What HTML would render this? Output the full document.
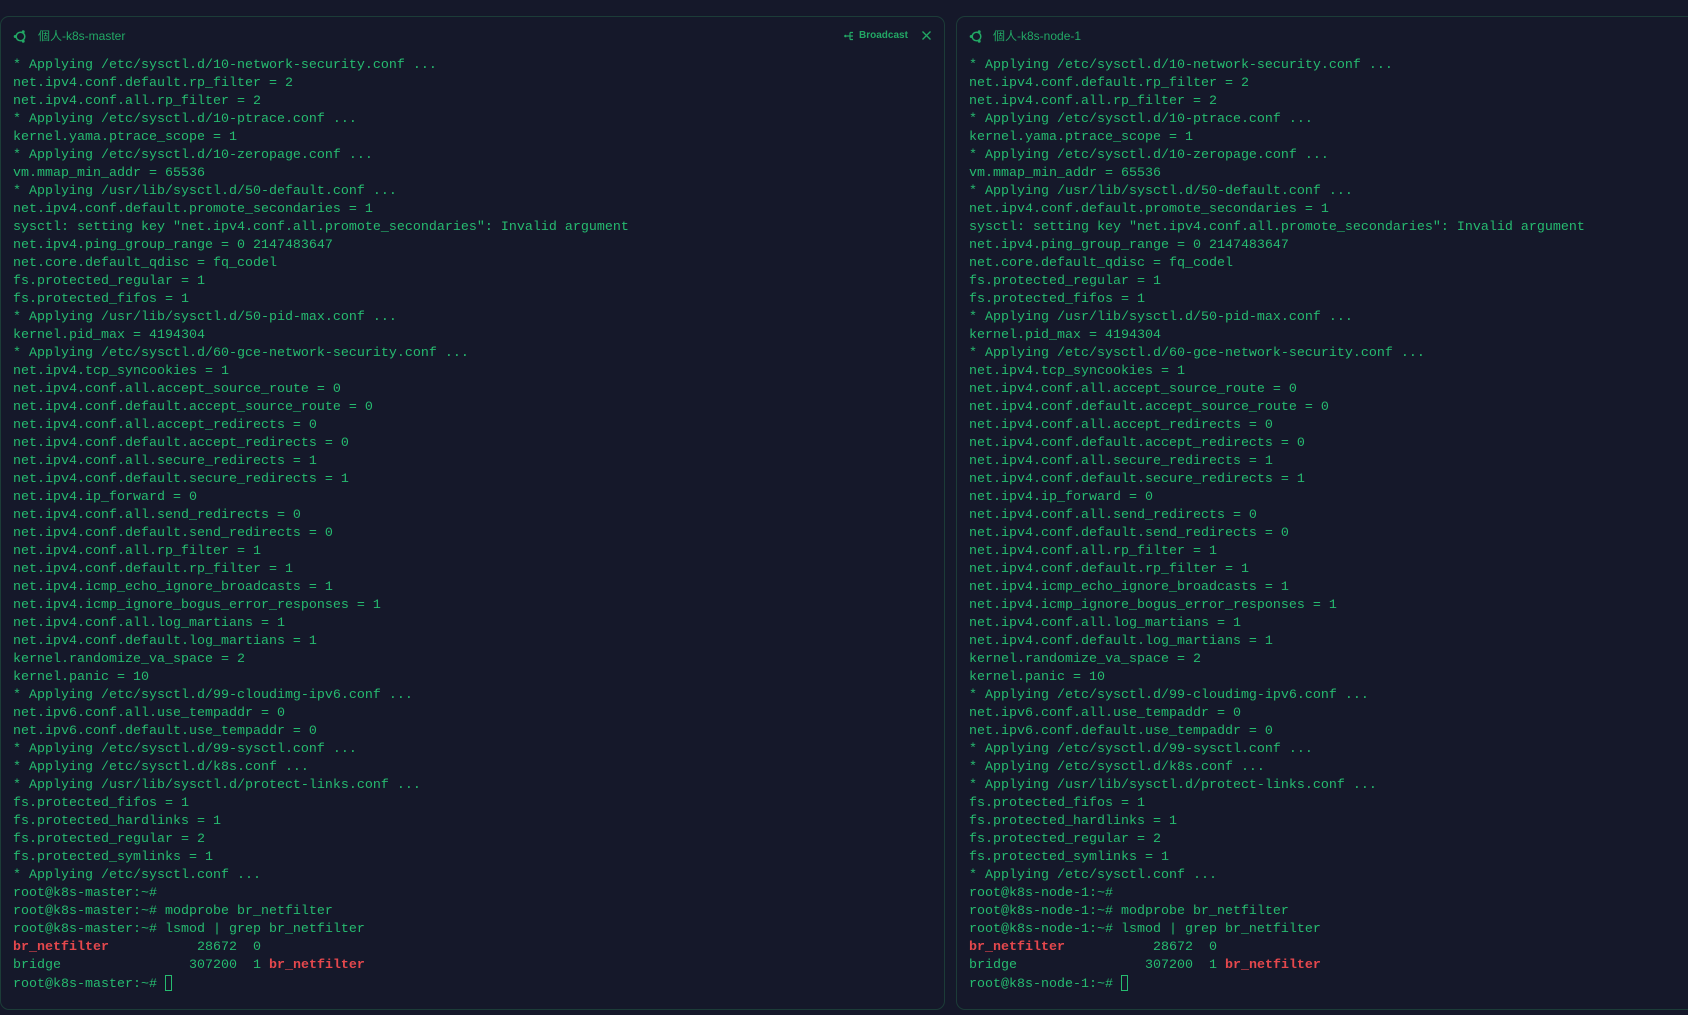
<!DOCTYPE html>
<html><head><meta charset="utf-8">
<style>
html,body{margin:0;padding:0;background:#15182a;width:1688px;height:1015px;overflow:hidden}
.panel{position:absolute;top:16px;height:994px;border:1px solid #1c3c38;border-radius:9px;background:#15182a;box-sizing:border-box}
.title{position:absolute;top:27px;font:12px "Liberation Sans","Noto Sans CJK TC",sans-serif;color:#22a865;height:18px;line-height:18px}
pre{position:absolute;top:57px;margin:0;font:13.33px/18px "Liberation Mono",monospace;color:#26bb70;white-space:pre}
.r{color:#e5484d;font-weight:bold}
.cur{display:inline-block;width:7px;height:16px;border:1px solid #26bb70;vertical-align:-4px;box-sizing:border-box}
svg{position:absolute}
</style></head><body>
<div class="panel" style="left:0;width:945px"></div>
<div class="panel" style="left:956px;width:760px"></div>

<svg style="left:13px;top:29px" width="15" height="15" viewBox="0 0 15 15"><circle cx="7.5" cy="7.5" r="4.3" fill="none" stroke="#22a865" stroke-width="1.5"/><circle cx="2.2" cy="7.5" r="1.5" fill="#22a865"/><circle cx="10.2" cy="2.8" r="1.5" fill="#22a865"/><circle cx="10.2" cy="12.2" r="1.5" fill="#22a865"/></svg>
<div class="title" style="left:38px">個人-k8s-master</div>
<svg style="left:844px;top:31px" width="10" height="10" viewBox="0 0 10 10"><circle cx="1.5" cy="5" r="1.3" fill="#22a865"/><path d="M3 5H6M6 1.5V8.5M6 1.5H9M6 5H9M6 8.5H9" stroke="#22a865" stroke-width="1.2" fill="none"/></svg>
<div class="title" style="left:859px;font-size:10px;font-weight:bold">Broadcast</div>
<svg style="left:922px;top:31px" width="9" height="9" viewBox="0 0 9 9"><path d="M0.5 0.5L8.5 8.5M8.5 0.5L0.5 8.5" stroke="#22a865" stroke-width="1.3"/></svg>

<svg style="left:969px;top:29px" width="15" height="15" viewBox="0 0 15 15"><circle cx="7.5" cy="7.5" r="4.3" fill="none" stroke="#22a865" stroke-width="1.5"/><circle cx="2.2" cy="7.5" r="1.5" fill="#22a865"/><circle cx="10.2" cy="2.8" r="1.5" fill="#22a865"/><circle cx="10.2" cy="12.2" r="1.5" fill="#22a865"/></svg>
<div class="title" style="left:993px">個人-k8s-node-1</div>

<pre style="left:13px">* Applying /etc/sysctl.d/10-network-security.conf ...
net.ipv4.conf.default.rp_filter = 2
net.ipv4.conf.all.rp_filter = 2
* Applying /etc/sysctl.d/10-ptrace.conf ...
kernel.yama.ptrace_scope = 1
* Applying /etc/sysctl.d/10-zeropage.conf ...
vm.mmap_min_addr = 65536
* Applying /usr/lib/sysctl.d/50-default.conf ...
net.ipv4.conf.default.promote_secondaries = 1
sysctl: setting key "net.ipv4.conf.all.promote_secondaries": Invalid argument
net.ipv4.ping_group_range = 0 2147483647
net.core.default_qdisc = fq_codel
fs.protected_regular = 1
fs.protected_fifos = 1
* Applying /usr/lib/sysctl.d/50-pid-max.conf ...
kernel.pid_max = 4194304
* Applying /etc/sysctl.d/60-gce-network-security.conf ...
net.ipv4.tcp_syncookies = 1
net.ipv4.conf.all.accept_source_route = 0
net.ipv4.conf.default.accept_source_route = 0
net.ipv4.conf.all.accept_redirects = 0
net.ipv4.conf.default.accept_redirects = 0
net.ipv4.conf.all.secure_redirects = 1
net.ipv4.conf.default.secure_redirects = 1
net.ipv4.ip_forward = 0
net.ipv4.conf.all.send_redirects = 0
net.ipv4.conf.default.send_redirects = 0
net.ipv4.conf.all.rp_filter = 1
net.ipv4.conf.default.rp_filter = 1
net.ipv4.icmp_echo_ignore_broadcasts = 1
net.ipv4.icmp_ignore_bogus_error_responses = 1
net.ipv4.conf.all.log_martians = 1
net.ipv4.conf.default.log_martians = 1
kernel.randomize_va_space = 2
kernel.panic = 10
* Applying /etc/sysctl.d/99-cloudimg-ipv6.conf ...
net.ipv6.conf.all.use_tempaddr = 0
net.ipv6.conf.default.use_tempaddr = 0
* Applying /etc/sysctl.d/99-sysctl.conf ...
* Applying /etc/sysctl.d/k8s.conf ...
* Applying /usr/lib/sysctl.d/protect-links.conf ...
fs.protected_fifos = 1
fs.protected_hardlinks = 1
fs.protected_regular = 2
fs.protected_symlinks = 1
* Applying /etc/sysctl.conf ...
root@k8s-master:~#
root@k8s-master:~# modprobe br_netfilter
root@k8s-master:~# lsmod | grep br_netfilter
<span class="r">br_netfilter</span>           28672  0
bridge                307200  1 <span class="r">br_netfilter</span>
root@k8s-master:~# <span class="cur"></span></pre>

<pre style="left:969px">* Applying /etc/sysctl.d/10-network-security.conf ...
net.ipv4.conf.default.rp_filter = 2
net.ipv4.conf.all.rp_filter = 2
* Applying /etc/sysctl.d/10-ptrace.conf ...
kernel.yama.ptrace_scope = 1
* Applying /etc/sysctl.d/10-zeropage.conf ...
vm.mmap_min_addr = 65536
* Applying /usr/lib/sysctl.d/50-default.conf ...
net.ipv4.conf.default.promote_secondaries = 1
sysctl: setting key "net.ipv4.conf.all.promote_secondaries": Invalid argument
net.ipv4.ping_group_range = 0 2147483647
net.core.default_qdisc = fq_codel
fs.protected_regular = 1
fs.protected_fifos = 1
* Applying /usr/lib/sysctl.d/50-pid-max.conf ...
kernel.pid_max = 4194304
* Applying /etc/sysctl.d/60-gce-network-security.conf ...
net.ipv4.tcp_syncookies = 1
net.ipv4.conf.all.accept_source_route = 0
net.ipv4.conf.default.accept_source_route = 0
net.ipv4.conf.all.accept_redirects = 0
net.ipv4.conf.default.accept_redirects = 0
net.ipv4.conf.all.secure_redirects = 1
net.ipv4.conf.default.secure_redirects = 1
net.ipv4.ip_forward = 0
net.ipv4.conf.all.send_redirects = 0
net.ipv4.conf.default.send_redirects = 0
net.ipv4.conf.all.rp_filter = 1
net.ipv4.conf.default.rp_filter = 1
net.ipv4.icmp_echo_ignore_broadcasts = 1
net.ipv4.icmp_ignore_bogus_error_responses = 1
net.ipv4.conf.all.log_martians = 1
net.ipv4.conf.default.log_martians = 1
kernel.randomize_va_space = 2
kernel.panic = 10
* Applying /etc/sysctl.d/99-cloudimg-ipv6.conf ...
net.ipv6.conf.all.use_tempaddr = 0
net.ipv6.conf.default.use_tempaddr = 0
* Applying /etc/sysctl.d/99-sysctl.conf ...
* Applying /etc/sysctl.d/k8s.conf ...
* Applying /usr/lib/sysctl.d/protect-links.conf ...
fs.protected_fifos = 1
fs.protected_hardlinks = 1
fs.protected_regular = 2
fs.protected_symlinks = 1
* Applying /etc/sysctl.conf ...
root@k8s-node-1:~#
root@k8s-node-1:~# modprobe br_netfilter
root@k8s-node-1:~# lsmod | grep br_netfilter
<span class="r">br_netfilter</span>           28672  0
bridge                307200  1 <span class="r">br_netfilter</span>
root@k8s-node-1:~# <span class="cur"></span></pre>
</body></html>
